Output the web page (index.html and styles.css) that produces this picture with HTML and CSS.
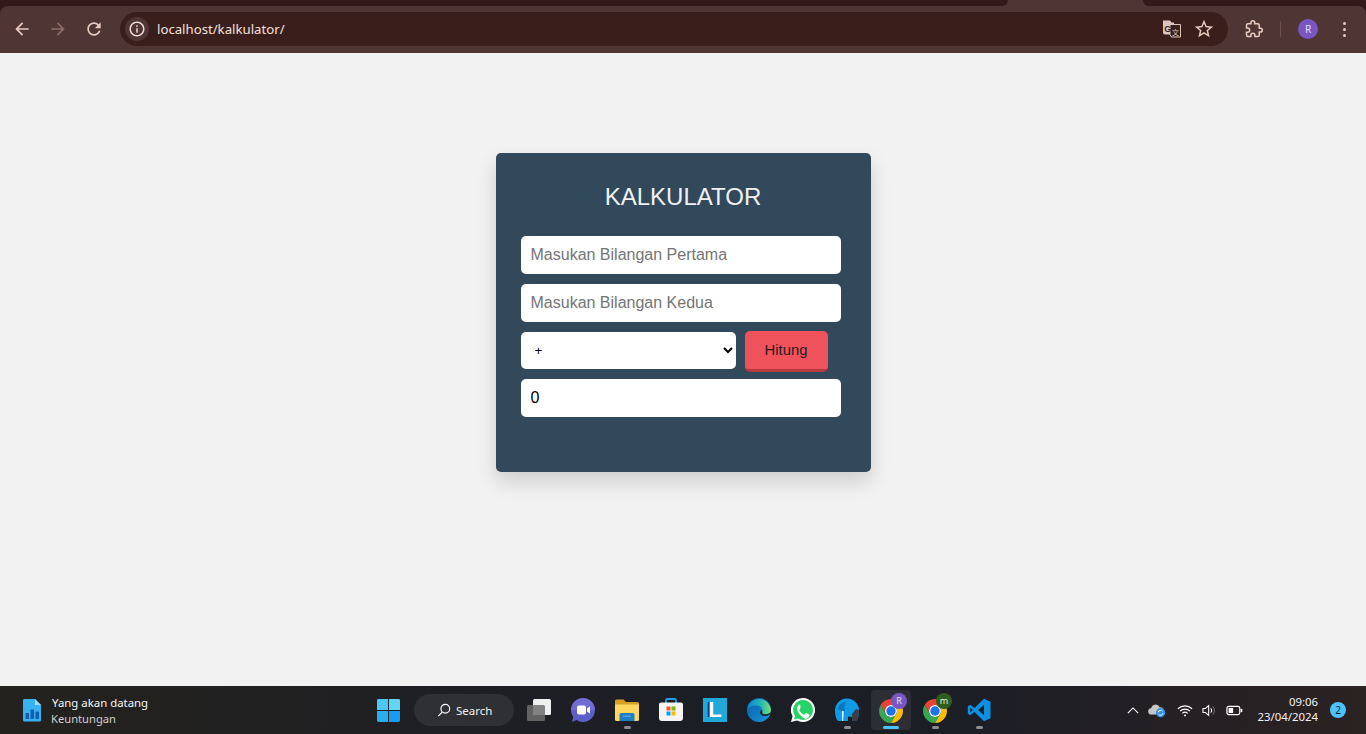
FILE: index.html
```html
<!DOCTYPE html>
<html lang="id">
<head>
<meta charset="utf-8">
<title>Kalkulator</title>
<link rel="stylesheet" href="styles.css">
</head>
<body>
<header class="browser">
  <div class="tabstrip">
    <div class="tab-dark tab-left"></div>
    <div class="tab-active"></div>
    <div class="tab-dark tab-right"></div>
  </div>
  <div class="toolbar">
    <div class="nav-btn"><svg class="ico20" viewBox="0 0 24 24"><path class="nav-fill" d="M20 11H7.83l5.59-5.59L12 4l-8 8 8 8 1.41-1.41L7.83 13H20v-2z"/></svg></div>
    <div class="nav-btn"><svg class="ico20" viewBox="0 0 24 24"><path class="nav-dim" d="M12 4l-1.41 1.41L16.17 11H4v2h12.17l-5.58 5.59L12 20l8-8z"/></svg></div>
    <div class="nav-btn"><svg class="ico20" viewBox="0 0 24 24"><path class="nav-fill" d="M17.65 6.35C16.2 4.9 14.21 4 12 4c-4.42 0-7.99 3.58-7.99 8s3.57 8 7.99 8c3.73 0 6.84-2.55 7.73-6h-2.08c-.82 2.33-3.04 4-5.65 4-3.31 0-6-2.69-6-6s2.69-6 6-6c1.66 0 3.14.69 4.22 1.78L13 11h7V4l-2.35 2.35z"/></svg></div>
    <div class="omnibox">
      <div class="info-chip"><svg class="ico18" viewBox="0 0 24 24"><path class="light-fill" d="M11 7h2v2h-2zm0 4h2v6h-2zm1-9C6.48 2 2 6.48 2 12s4.48 10 10 10 10-4.48 10-10S17.52 2 12 2zm0 18c-4.41 0-8-3.59-8-8s3.59-8 8-8 8 3.59 8 8-3.59 8-8 8z"/></svg></div>
      <span class="url">localhost/kalkulator/</span>
      <div class="omni-actions">
        <svg class="ico20" viewBox="0 0 20 20">
          <path fill="#dcc6bf" d="M1 1.5h7l1.500 2H12v12H3a2 2 0 0 1-2-2z"/>
          <path fill="#3a1e1b" stroke="#dcc6bf" stroke-width="1" d="M8 5.500h10.500v12.500H9.500L8 15.500z"/>
          <text class="tr-g" x="2.200" y="12.500">G</text>
          <text class="tr-z" x="10" y="15.500">文</text>
        </svg>
        <svg class="ico22" viewBox="0 0 24 24"><path class="nav-fill" d="M22 9.24l-7.19-.62L12 2 9.19 8.63 2 9.24l5.46 4.73L5.82 21 12 17.27 18.18 21l-1.63-7.03L22 9.24zM12 15.4l-3.76 2.27 1-4.28-3.32-2.88 4.38-.38L12 6.1l1.71 4.04 4.38.38-3.32 2.88 1 4.28L12 15.4z"/></svg>
      </div>
    </div>
    <div class="tool-actions">
      <svg class="ext" viewBox="0 0 24 24"><path class="ext-line" d="M20.5 11H19V7c0-1.1-.9-2-2-2h-4V3.5C13 2.12 11.88 1 10.5 1S8 2.12 8 3.5V5H4c-1.1 0-1.99.9-1.99 2v3.8H3.5c1.49 0 2.7 1.21 2.7 2.7s-1.21 2.7-2.7 2.7H2V20c0 1.1.9 2 2 2h3.8v-1.5c0-1.49 1.21-2.7 2.7-2.7 1.49 0 2.7 1.21 2.7 2.7V22H17c1.1 0 2-.9 2-2v-4h1.5c1.38 0 2.5-1.12 2.5-2.5S21.88 11 20.5 11z"/></svg>
      <span class="divider"></span>
      <span class="avatar">R</span>
      <span class="dots"><i></i><i></i><i></i></span>
    </div>
  </div>
</header>

<main class="page">
  <section class="card">
    <h1 class="title">KALKULATOR</h1>
    <input class="field" type="text" placeholder="Masukan Bilangan Pertama">
    <input class="field" type="text" placeholder="Masukan Bilangan Kedua">
    <div class="op-row">
      <select class="op"><option>+</option><option>-</option><option>*</option><option>/</option></select>
      <button class="hitung" type="button">Hitung</button>
    </div>
    <input class="field" type="text" value="0" readonly>
  </section>
</main>

<footer class="taskbar">
  <div class="tb-left">
    <svg class="sheet" viewBox="0 0 20 24">
      <path fill="#37b3f5" d="M2 1h11l6 6v15a1.500 1.500 0 0 1-1.500 1.500h-15A1.500 1.500 0 0 1 1 22V2.500A1.500 1.500 0 0 1 2 1z"/>
      <path fill="#9fdcfb" d="M13 1l6 6h-6z"/>
      <path fill="#0f5fae" d="M3.500 15h3.500v6H3.500zM8.500 11.500H12V21H8.500zM13.500 13.500H17V21h-3.500z"/>
    </svg>
    <div class="weather">
      <span class="w1">Yang akan datang</span>
      <span class="w2">Keuntungan</span>
    </div>
  </div>

  <div class="tb-center">
    <div class="tb-btn">
      <svg class="win" viewBox="0 0 24 24">
        <path fill="#4cc9f3" d="M0 1.500A1.500 1.500 0 0 1 1.500 0h10v11.500H0z"/>
        <path fill="#62d4f6" d="M12.500 0h10A1.500 1.500 0 0 1 24 1.500v10H12.500z"/>
        <path fill="#2aaef0" d="M0 12.500h11.500V24h-10A1.500 1.500 0 0 1 0 22.500z"/>
        <path fill="#1a9cee" d="M12.500 12.500H24v10a1.500 1.500 0 0 1-1.500 1.500h-10z"/>
      </svg>
    </div>
    <div class="search">
      <svg class="ico14" viewBox="0 0 16 16"><circle class="line-w" cx="9.500" cy="6.500" r="5"/><path class="line-w" d="M6 10.500L1.500 15"/></svg>
      <span>Search</span>
    </div>
    <div class="tb-btn">
      <svg class="ico24" viewBox="0 0 24 24">
        <rect x="6" y="1" width="18" height="16" rx="1.500" fill="#f0f0f0"/>
        <rect x="0" y="7" width="18" height="16" rx="1.500" fill="#6e6e6e" fill-opacity=".85"/>
      </svg>
    </div>
    <div class="tb-btn">
      <svg class="ico24" viewBox="0 0 24 24">
        <path fill="#5b5fc7" d="M12 0a12 12 0 1 1-6.500 22.100L1 24l1.200-5.200A12 12 0 0 1 12 0z"/>
        <path fill="#8a7be0" d="M12 0a12 12 0 0 1 12 12H0A12 12 0 0 1 12 0z" fill-opacity=".5"/>
        <rect x="6" y="7.500" width="9" height="9" rx="2" fill="#fff"/>
        <path fill="#fff" d="M16 10.500l3-2.200v7.400l-3-2.200z"/>
      </svg>
    </div>
    <div class="tb-btn run">
      <svg class="ico24" viewBox="0 0 24 24">
        <path fill="#d9a01f" d="M0 3a1.500 1.500 0 0 1 1.500-1.500h7L11 4h11.500A1.500 1.500 0 0 1 24 5.500V9H0z"/>
        <path fill="#ffd75e" d="M0 6.500h24v15a1.500 1.500 0 0 1-1.500 1.500h-21A1.500 1.500 0 0 1 0 21.500z"/>
        <path fill="#1f7fc4" d="M4.500 16.500a1.500 1.500 0 0 1 1.500-1.500h12a1.500 1.500 0 0 1 1.500 1.500V23h-15z"/>
        <path fill="#49a9e8" d="M8 17.500h8V19H8z"/>
      </svg>
    </div>
    <div class="tb-btn">
      <svg class="ico24" viewBox="0 0 24 24">
        <path class="store-handle" d="M7 6V2.500A1.500 1.500 0 0 1 8.500 1h7A1.500 1.500 0 0 1 17 2.500V6"/>
        <path fill="#f4f4f4" d="M0 6.500A2 2 0 0 1 2 4.500h20a2 2 0 0 1 2 2V20a3 3 0 0 1-3 3H3a3 3 0 0 1-3-3z"/>
        <path fill="#f05a28" d="M7.500 8.500h4v4h-4z"/>
        <path fill="#7fba00" d="M12.500 8.500h4v4h-4z"/>
        <path fill="#00a4ef" d="M7.500 13.500h4v4h-4z"/>
        <path fill="#ffb900" d="M12.500 13.500h4v4h-4z"/>
      </svg>
    </div>
    <div class="tb-btn">
      <div class="l-logo">L</div>
    </div>
    <div class="tb-btn">
      <svg class="ico24" viewBox="0 0 24 24">
        <defs>
          <linearGradient id="edgeA" x1="0" y1="0.500" x2="1" y2="0.500"><stop offset="0" stop-color="#0f86d0"/><stop offset="0.550" stop-color="#20b5b8"/><stop offset="1" stop-color="#78e070"/></linearGradient>
          <linearGradient id="edgeB" x1="0" y1="0" x2="1" y2="1"><stop offset="0" stop-color="#0b5ea6"/><stop offset="1" stop-color="#1695dc"/></linearGradient>
        </defs>
        <circle cx="12" cy="12" r="12" fill="url(#edgeB)"/>
        <path fill="#1b1f28" d="M13 14.500C14 18.500 19 19.500 23.500 15.500L24 12H14z"/>
        <path fill="url(#edgeA)" d="M0.300 10.500A12 12 0 0 1 24 12C24 15 21 16.200 18.300 16.200 15.800 16.200 14.600 15 15.300 13.200 15.800 11 14 7.500 10 7.500 5.500 7.500 1.500 9 0.300 10.500z"/>
      </svg>
    </div>
    <div class="tb-btn">
      <svg class="ico24" viewBox="0 0 24 24">
        <path fill="#fff" d="M12 0a12 12 0 1 1-5.900 22.400L0 24l1.600-5.900A12 12 0 0 1 12 0z"/>
        <path fill="#25d366" d="M12 2.100a9.900 9.900 0 1 1-5.200 18.300l-3.800 1 1-3.700A9.900 9.900 0 0 1 12 2.100z"/>
        <path fill="#fff" d="M8.700 6.500c-.3 0-.8.100-1.200.6-.4.500-1.500 1.500-1.500 3.500s1.500 4 1.700 4.300c.2.300 3 4.700 7.300 6 .1-.1 2.800-.9 3.300-2.800.2-.7.200-1.300.1-1.400-.1-.2-.3-.2-.6-.4l-2.400-1.200c-.3-.1-.6-.2-.8.100l-1.100 1.400c-.2.200-.4.300-.7.100-1.500-.7-3.500-2.200-4.500-4.500-.1-.3 0-.5.200-.7l.8-1c.1-.2.200-.4.100-.7L9.300 7c-.2-.4-.4-.5-.6-.5z"/>
      </svg>
    </div>
    <div class="tb-btn run">
      <svg class="ico24" viewBox="0 0 24 24">
        <path fill="#0f9ae6" d="M0 13A12 12 0 0 1 24 12C24 17 23 21 21 23H17V19L13 18.500V23H9V19H7V23H3C1 21 0 17 0 13z"/>
        <path fill="#3a3f48" d="M17 23V16L21 11 24 12C24 17 23 21 21 23z"/>
        <path fill="#d8eefa" d="M7 11h1.600v12H7z"/>
        <path fill="#0a74bd" d="M3 11C4 6 7 4 11 4 9 7 9 10 10 13 7 13 5 12.500 3 11z"/>
      </svg>
    </div>
    <div class="tb-btn run active">
      <svg class="ico24 chrome" viewBox="0 0 24 24">
        <path fill="#ea4335" d="M22.390 6A12 12 0 0 0 1.610 6L6.800 15A6 6 0 0 1 12 6z"/>
        <path fill="#34a853" d="M1.610 6A12 12 0 0 0 12 24L17.200 15A6 6 0 0 1 6.800 15z"/>
        <path fill="#fbbc04" d="M22.390 6A12 12 0 0 1 12 24L17.200 15A6 6 0 0 0 12 6z"/>
        <circle cx="12" cy="12" r="6" fill="#fff"/>
        <circle cx="12" cy="12" r="4.700" fill="#1a73e8"/>
      </svg>
      <span class="prof prof-r">R</span>
    </div>
    <div class="tb-btn run">
      <svg class="ico24 chrome" viewBox="0 0 24 24">
        <path fill="#ea4335" d="M22.390 6A12 12 0 0 0 1.610 6L6.800 15A6 6 0 0 1 12 6z"/>
        <path fill="#34a853" d="M1.610 6A12 12 0 0 0 12 24L17.200 15A6 6 0 0 1 6.800 15z"/>
        <path fill="#fbbc04" d="M22.390 6A12 12 0 0 1 12 24L17.200 15A6 6 0 0 0 12 6z"/>
        <circle cx="12" cy="12" r="6" fill="#fff"/>
        <circle cx="12" cy="12" r="4.700" fill="#1a73e8"/>
      </svg>
      <span class="prof prof-m">m</span>
    </div>
    <div class="tb-btn run">
      <svg class="ico24" viewBox="0 0 24 24">
        <path fill="#0d8fe2" d="M17 .800L23.500 3.800V20.200L17 23.200 7.500 14 3.300 17.200 .800 15.800V8.200L3.300 6.800 7.500 10z"/>
        <path fill="#1c2027" d="M17 6.800L11.200 12 17 17.200zM3.300 9.500L5.600 12 3.300 14.500z"/>
      </svg>
    </div>
  </div>

  <div class="tb-right">
    <svg class="chev" viewBox="0 0 14 8"><path class="line-w" d="M1 7l6-6 6 6"/></svg>
    <svg class="cloud" viewBox="0 0 20 16">
      <path fill="#c6c6c6" d="M4 12.500a3.500 3.500 0 0 1-.500-7 5 5 0 0 1 9.500-1 4 4 0 0 1 1 8z"/>
      <circle cx="14" cy="10.500" r="5.200" fill="#2f8fe8"/>
      <path class="sync" d="M11.400 10a2.700 2.700 0 0 1 4.800-1.200M16.600 11a2.700 2.700 0 0 1-4.800 1.200"/>
    </svg>
    <svg class="wifi" viewBox="0 0 18 14"><path class="line-w" d="M1 5a11.500 11.500 0 0 1 16 0M3.500 7.700a8 8 0 0 1 11 0M6 10.300a4.300 4.300 0 0 1 6 0"/><circle cx="9" cy="12.500" r="1.100" fill="#fff"/></svg>
    <svg class="vol" viewBox="0 0 18 16"><path class="line-w" d="M1 5.500h3L8 2v12L4 10.500H1zM10.500 5.500a3.500 3.500 0 0 1 0 5"/><path class="line-g" d="M13 3a7 7 0 0 1 0 10"/></svg>
    <svg class="batt" viewBox="0 0 18 12"><rect class="line-w" x=".750" y="1.500" width="14" height="9" rx="2"/><rect x="2.500" y="3.200" width="5" height="5.600" fill="#fff"/><rect x="15.700" y="4" width="1.800" height="4" rx=".8" fill="#fff"/></svg>
    <div class="clock"><span>09:06</span><span>23/04/2024</span></div>
    <span class="badge">2</span>
  </div>
</footer>
</body>
</html>
```
FILE: styles.css
```css
* { box-sizing: border-box; }
html, body { margin: 0; height: 100%; }
body {
  display: flex;
  flex-direction: column;
  overflow: hidden;
  background: #f2f2f2;
  font-family: "Liberation Sans", Arial, sans-serif;
}
svg { display: block; flex: none; }
.ico14 { width: 14px; height: 14px; }
.ico18 { width: 18px; height: 18px; }
.ico20 { width: 20px; height: 20px; }
.ico22 { width: 22px; height: 22px; }
.ico24 { width: 24px; height: 24px; }

/* browser chrome */
.browser { flex: none; height: 53px; background: #33191a; }
.tabstrip { display: flex; height: 6px; background: #4f3533; }
.tab-dark { height: 6px; background: #33191a; }
.tab-left { width: 1008px; border-bottom-right-radius: 8px; }
.tab-active { width: 135px; }
.tab-right { flex: 1; border-bottom-left-radius: 8px; }
.toolbar {
  display: flex;
  align-items: center;
  height: 47px;
  padding: 0 0 1px 4px;
  background: #4f3533;
  border-radius: 8px 8px 0 0;
}
.nav-btn { width: 36px; height: 36px; display: flex; align-items: center; justify-content: center; }
.nav-fill { fill: #e9cbc1; }
.nav-dim { fill: #8d6f69; }
.light-fill { fill: #f0dcd6; }
.omnibox {
  display: flex;
  align-items: center;
  width: 1108px;
  height: 34px;
  margin-left: 8px;
  padding: 0 13px 0 5px;
  background: #3a1e1b;
  border-radius: 17px;
}
.info-chip {
  width: 24px;
  height: 24px;
  display: flex;
  align-items: center;
  justify-content: center;
  background: #4f3533;
  border-radius: 50%;
}
.url {
  margin-left: 8px;
  flex: 1;
  font: 13.2px "Noto Sans", sans-serif;
  color: #f3e2dc;
}
.omni-actions { display: flex; align-items: center; gap: 11px; }
.tr-g { font: bold 9px "Liberation Sans", sans-serif; fill: #3a1e1b; }
.tr-z { font: 7px "Noto Sans CJK SC", sans-serif; fill: #dcc6bf; }
.tool-actions { flex: 1; display: flex; align-items: center; padding-left: 17px; }
.ext { width: 18px; height: 18px; }
.ext-line { fill: none; stroke: #e9cbc1; stroke-width: 2; }
.divider { width: 1px; height: 16px; margin-left: 17px; background: #6d514e; }
.avatar {
  width: 20px;
  height: 20px;
  margin-left: 17px;
  border-radius: 50%;
  background: #7a56c4;
  color: #e8e0f5;
  font: 10px/20px "Noto Sans", sans-serif;
  text-align: center;
}
.dots { display: flex; flex-direction: column; gap: 3px; margin-left: 25px; }
.dots i { width: 3px; height: 3px; border-radius: 50%; background: #e9cbc1; }

/* page */
.page { flex: 1; min-height: 0; background: #f2f2f2; }
.card {
  width: 375px;
  height: 319px;
  margin: 100px auto 0;
  padding: 25px 30px 0 25px;
  background: #32485b;
  border-radius: 5px;
  box-shadow: 0 10px 20px rgba(0, 0, 0, .15);
}
.title {
  margin: 0 0 20px;
  font-size: 24px;
  font-weight: 400;
  line-height: 38px;
  text-align: center;
  color: #f1f1f1;
  width: 325px;
}
.field {
  display: block;
  width: 320px;
  height: 38px;
  margin: 0 0 10px;
  padding: 0 10px;
  border: 0;
  border-radius: 5px;
  background: #fff;
  color: #000;
  font: 16px "Liberation Sans", Arial, sans-serif;
  outline: none;
}
.op-row { display: flex; align-items: flex-start; gap: 9px; margin: -1px 0 7px; }
.op {
  width: 215px;
  height: 37px;
  margin-top: 1px;
  padding: 0 10px;
  border: 0;
  border-radius: 5px;
  background: #fff;
  color: #000;
  font: 13.333px "Liberation Sans", Arial, sans-serif;
}
.hitung {
  width: 83px;
  height: 41px;
  padding: 0;
  border: 0;
  border-bottom: 3px solid #b83b40;
  border-radius: 5px;
  background: #ef525b;
  color: #2e1a1c;
  font: 14.8px "Liberation Sans", Arial, sans-serif;
}

/* taskbar */
.taskbar {
  flex: none;
  display: flex;
  height: 48px;
  background: linear-gradient(90deg, #24221e 0%, #1c1e26 50%, #1c1e26 70%, #2b2222 100%);
  color: #fff;
  font-family: "Noto Sans", sans-serif;
}
.tb-left { width: 366px; display: flex; align-items: center; padding-left: 22px; }
.sheet { width: 20px; height: 24px; }
.weather { display: flex; flex-direction: column; margin-left: 10px; padding-top: 2px; }
.w1 { font-size: 11.4px; line-height: 16px; color: #f5f5f5; }
.w2 { font-size: 11.2px; line-height: 16px; color: #cfcfcf; margin-left: -1px; }
.tb-center { display: flex; align-items: center; width: 636px; }
.tb-btn {
  position: relative;
  width: 44px;
  height: 48px;
  display: flex;
  align-items: center;
  justify-content: center;
}
.win { width: 23px; height: 23px; margin-left: 1px; }
.tb-btn.run::after {
  content: "";
  position: absolute;
  left: 18.5px;
  bottom: 5px;
  width: 7px;
  height: 3px;
  border-radius: 2px;
  background: #8e8e8e;
}
.tb-btn.active::before {
  content: "";
  position: absolute;
  left: 2px;
  top: 4px;
  width: 40px;
  height: 40px;
  border-radius: 4px;
  background: rgba(255, 255, 255, .07);
}
.tb-btn.active::after { left: 14px; width: 16px; background: #4cc2ff; }
.search {
  display: flex;
  align-items: center;
  gap: 5px;
  width: 100px;
  height: 32px;
  margin: 0 3px 0 4px;
  padding-left: 23px;
  border-radius: 16px;
  background: #2e3033;
  font-size: 11.500px;
  color: #f0f0f0;
}
.line-w { fill: none; stroke: #fff; stroke-width: 1.300; }
.line-g { fill: none; stroke: #777; stroke-width: 1.200; }
.store-handle { fill: none; stroke: #2a9fe0; stroke-width: 1.800; }
.l-logo {
  width: 24px;
  height: 24px;
  background: #1fa8d8;
  color: #fff;
  font: bold 22px/24px "Liberation Sans", sans-serif;
  text-align: center;
  text-shadow: -2px 0 0 #123a8a;
}
.chrome { position: relative; top: 1px; }
.prof {
  position: absolute;
  top: 7px;
  width: 16px;
  height: 16px;
  border-radius: 50%;
  font-size: 9px;
  line-height: 16px;
  text-align: center;
}
.prof-r { left: 22px; background: #7a56c4; color: #e8e0f5; }
.prof-m { left: 23px; background: #2e5d1e; color: #e4efd9; }
.tb-right { flex: 1; display: flex; align-items: center; padding-left: 125px; }
.chev { width: 12px; height: 7px; }
.cloud { width: 18px; height: 15px; margin-left: 9px; }
.sync { fill: none; stroke: #fff; stroke-width: 1.100; }
.wifi { width: 16px; height: 13px; margin-left: 11px; }
.vol { width: 15px; height: 13px; margin-left: 9px; }
.batt { width: 17px; height: 11px; margin-left: 9px; }
.clock {
  width: 75px;
  padding-bottom: 2px;
  display: flex;
  flex-direction: column;
  align-items: flex-end;
  font-size: 11.4px;
  line-height: 15px;
  color: #f2f2f2;
}
.badge {
  width: 16px;
  height: 16px;
  margin-left: 12px;
  border-radius: 50%;
  background: #4cc2ff;
  color: #10202c;
  font-size: 10px;
  line-height: 16px;
  text-align: center;
}
```
